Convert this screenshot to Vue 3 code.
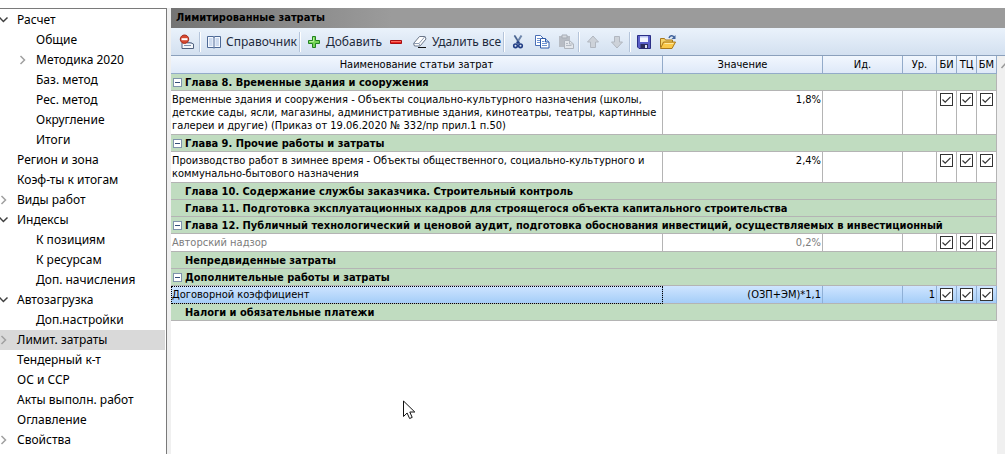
<template>
  <div class="page">
    <!-- Дерево разделов -->
    <nav class="sidebar">
      <ul class="tree">
        <li
          v-for="item in tree"
          :key="item.name"
          class="tree-item"
          :class="{ child: item.child, active: item.name === current }"
        >
          <button v-if="item.state" class="toggle" :class="item.state" :aria-label="item.name">
            <svg v-if="item.state === 'open'" width="9" height="8" viewBox="0 0 9 8">
              <path d="M-0.5 1.5l3.900 4L7.500 1.500" />
            </svg>
            <svg v-else width="9" height="10" viewBox="0 0 9 10">
              <path d="M1.500 1l4 4-4 4" />
            </svg>
          </button>
          <span v-else class="toggle"></span>
          <a href="#" class="tree-link" @click.prevent="current = item.name">{{ item.name }}</a>
        </li>
      </ul>
    </nav>

    <main class="panel">
      <h1 class="title">Лимитированные затраты</h1>

      <!-- Панель инструментов -->
      <div class="toolbar">
        <button class="tool" aria-label="Исключить">
          <svg width="16" height="16" viewBox="0 0 16 16">
            <path d="M3 8.5h8l3.5 1.5v4.5H3z" fill="#f4f7fb" stroke="#50617e" />
            <path d="M8 9h5M5 11.5h7" stroke="#7e90ad" />
            <circle cx="5.5" cy="5.2" r="4.2" fill="#d84a32" stroke="#a32b1b" />
            <path d="M2.5 5.2h6" stroke="#fff" stroke-width="2" />
          </svg>
        </button>
        <span class="sep"></span>
        <button class="tool labelled">
          <svg width="16" height="16" viewBox="0 0 16 16">
            <path d="M1.5 2.5h6l.5 1 .5-1h6v11h-6l-.5.8-.5-.8h-6z" fill="#f5f9ff" stroke="#4d6996" />
            <path d="M8 3v11" stroke="#4d6996" />
            <path d="M3 5h3.500M3 7h3.500M3 9h3.500M3 11h3.500M9.500 5H13M9.500 7H13M9.500 9H13M9.500 11H13" stroke="#a4bce0" />
          </svg>
          <span>Справочник</span>
        </button>
        <span class="sep"></span>
        <button class="tool labelled">
          <svg width="16" height="16" viewBox="0 0 16 16">
            <path d="M6.500 2.500h3v4h4v3h-4v4h-3v-4h-4v-3h4z" fill="#75d655" stroke="#238222" />
            <path d="M7.500 3.500v4h-4" fill="none" stroke="#b6f09c" />
          </svg>
          <span>Добавить</span>
        </button>
        <button class="tool" aria-label="Удалить">
          <svg width="16" height="16" viewBox="0 0 16 16">
            <path d="M2.500 6.500h11v3h-11z" fill="#ea2420" stroke="#a80e10" />
            <path d="M3 7.500h10" stroke="#fb6c60" />
          </svg>
        </button>
        <button class="tool labelled">
          <svg width="16" height="16" viewBox="0 0 16 16">
            <path d="M1.500 9.500l6-7h5.500l1 2.500-6 7H2.500z" fill="#fff" stroke="#6a7689" />
            <path d="M1.500 9.500H7l1 2.500M7 9.500l6-7" fill="none" stroke="#8f9db2" />
            <path d="M6 13.500h8" stroke="#111" />
          </svg>
          <span>Удалить все</span>
        </button>
        <span class="sep"></span>
        <button class="tool" aria-label="Вырезать">
          <svg width="16" height="16" viewBox="0 0 16 16">
            <path d="M4.500 1.500l5 8M11.500 1.500l-5 8" stroke="#6e86ab" stroke-width="2" />
            <path d="M4.500 1.500l5 8" stroke="#405a88" />
            <circle cx="5.500" cy="11.800" r="1.800" fill="none" stroke="#233f86" stroke-width="1.600" />
            <circle cx="10.500" cy="11.800" r="1.800" fill="none" stroke="#233f86" stroke-width="1.600" />
            <circle cx="8" cy="8.500" r="1.300" fill="#233f86" />
          </svg>
        </button>
        <button class="tool" aria-label="Копировать">
          <svg width="16" height="16" viewBox="0 0 16 16">
            <path d="M1.500 1.500h5l2.500 2.500v7.500H1.500z" fill="#fff" stroke="#4a6fb5" />
            <path d="M3 4.500h3M3 6.500h4M3 8.500h4" stroke="#6c92d3" />
            <path d="M6.500 4.500h5l3.500 3.500v6H6.500z" fill="#fff" stroke="#305ba8" />
            <path d="M11.500 4.500V8H15" fill="#bcd2f2" stroke="#305ba8" />
            <path d="M8 7.500h2.500M8 9.500h5M8 11.500h5" stroke="#6c92d3" />
          </svg>
        </button>
        <button class="tool" aria-label="Вставить" disabled>
          <svg width="16" height="16" viewBox="0 0 16 16">
            <path d="M1 2h11v11H1z" fill="#b7bcc4" />
            <path d="M4 1h5v3H4z" fill="#d5d9df" stroke="#a7adb6" />
            <path d="M6.500 6.500h5L15.500 10v4.500h-9z" fill="#e3e7ec" stroke="#aeb4bd" />
            <path d="M11.500 6.500V10h4M8 11.500h5.500M8 9.500h2" fill="none" stroke="#b4bac3" />
          </svg>
        </button>
        <span class="sep"></span>
        <button class="tool" aria-label="Вверх" disabled>
          <svg width="16" height="16" viewBox="0 0 16 16">
            <path d="M8 2l5.500 6h-3v5.500h-5V8h-3z" fill="#cdd2d9" stroke="#b1b7c0" />
          </svg>
        </button>
        <button class="tool" aria-label="Вниз" disabled>
          <svg width="16" height="16" viewBox="0 0 16 16">
            <path d="M8 14L2.500 8h3V2.500h5V8h3z" fill="#cdd2d9" stroke="#b1b7c0" />
          </svg>
        </button>
        <span class="sep"></span>
        <button class="tool" aria-label="Сохранить">
          <svg width="16" height="16" viewBox="0 0 16 16">
            <path d="M1.500 1.500h13v13H3l-1.500-1.500z" fill="#5a5fc8" stroke="#2b2f86" />
            <path d="M4 2h8v6H4z" fill="#f3f6ff" />
            <path d="M4 2h8v1.500H4z" fill="#b9c3f0" />
            <path d="M4.500 10h7.500v4.500H4.500z" fill="#2a2c5c" />
            <path d="M9 11h2v3H9z" fill="#dfe4f5" />
          </svg>
        </button>
        <button class="tool" aria-label="Открыть">
          <svg width="16" height="16" viewBox="0 0 16 16">
            <path d="M.500 13.500v-9h4l1 1.500h7v3" fill="#f5d36b" stroke="#a9781b" />
            <path d="M.500 14.500l3-6.500h12l-3.500 6.500z" fill="#fbc94a" stroke="#a9781b" />
            <path d="M4.500 9.500h9" stroke="#ffe9a0" />
            <path d="M9 4c1-2.500 3.500-3 5-1" fill="none" stroke="#42649c" stroke-width="1.500" />
            <path d="M15.500 1v4h-4z" fill="#42649c" />
          </svg>
        </button>
      </div>

      <!-- Таблица затрат -->
      <div class="grid-area">
        <div class="grid">
          <table>
            <colgroup>
              <col />
              <col class="col-value" />
              <col class="col-id" />
              <col class="col-level" />
              <col class="col-flag" />
              <col class="col-flag" />
              <col class="col-flag" />
            </colgroup>
            <thead>
              <tr>
                <th v-for="h in headers" :key="h">{{ h }}</th>
              </tr>
            </thead>
            <tbody>
              <template v-for="row in rows" :key="row.name">
                <tr v-if="row.group" class="group">
                  <td colspan="7">
                    <div class="group-name">
                      <button v-if="row.open" class="collapse" aria-label="Свернуть"></button>
                      <span v-else class="collapse-space"></span>
                      <span>{{ row.name }}</span>
                    </div>
                  </td>
                </tr>
                <tr v-else class="item" :class="{ muted: row.muted, selected: row.selected }">
                  <td>{{ row.name }}</td>
                  <td class="num">{{ row.value }}</td>
                  <td></td>
                  <td class="num">{{ row.level }}</td>
                  <td v-for="flag in flags" :key="flag" class="flag">
                    <input type="checkbox" checked :aria-label="flag" />
                  </td>
                </tr>
              </template>
            </tbody>
          </table>

          <svg class="cursor" width="13" height="20" viewBox="0 0 13 20">
            <path d="M.500 1v15.500l3.600-3.500 2.500 5.500 2.600-1.100-2.400-5.400h5z" fill="#fff" stroke="#111" />
          </svg>
        </div>
        <div class="scrollbar">
          <svg width="17" height="17" viewBox="0 0 17 17">
            <path d="M4.500 12l4-4.500 4 4.500" fill="none" stroke="#9a9a9a" stroke-width="1.500" />
          </svg>
        </div>
      </div>
    </main>
  </div>
</template>

<script setup>
import { ref } from 'vue';

const current = ref('Лимит. затраты');

const tree = [
  { name: 'Расчет', state: 'open' },
  { name: 'Общие', child: true },
  { name: 'Методика 2020', child: true, state: 'closed' },
  { name: 'Баз. метод', child: true },
  { name: 'Рес. метод', child: true },
  { name: 'Округление', child: true },
  { name: 'Итоги', child: true },
  { name: 'Регион и зона' },
  { name: 'Коэф-ты к итогам' },
  { name: 'Виды работ', state: 'closed' },
  { name: 'Индексы', state: 'open' },
  { name: 'К позициям', child: true },
  { name: 'К ресурсам', child: true },
  { name: 'Доп. начисления', child: true },
  { name: 'Автозагрузка', state: 'open' },
  { name: 'Доп.настройки', child: true },
  { name: 'Лимит. затраты', state: 'closed' },
  { name: 'Тендерный к-т' },
  { name: 'ОС и ССР' },
  { name: 'Акты выполн. работ' },
  { name: 'Оглавление' },
  { name: 'Свойства', state: 'closed' },
];

const flags = ['БИ', 'ТЦ', 'БМ'];
const headers = ['Наименование статьи затрат', 'Значение', 'Ид.', 'Ур.', ...flags];

const rows = [
  { group: true, open: true, name: 'Глава 8. Временные здания и сооружения' },
  {
    name: 'Временные здания и сооружения - Объекты социально-культурного назначения (школы, детские сады, ясли, магазины, административные здания, кинотеатры, театры, картинные галереи и другие) (Приказ от 19.06.2020 № 332/пр прил.1 п.50)',
    value: '1,8%',
  },
  { group: true, open: true, name: 'Глава 9. Прочие работы и затраты' },
  {
    name: 'Производство работ в зимнее время - Объекты общественного, социально-культурного и коммунально-бытового назначения',
    value: '2,4%',
  },
  { group: true, name: 'Глава 10. Содержание службы заказчика. Строительный контроль' },
  { group: true, name: 'Глава 11. Подготовка эксплуатационных кадров для строящегося объекта капитального строительства' },
  { group: true, open: true, name: 'Глава 12. Публичный технологический и ценовой аудит, подготовка обоснования инвестиций, осуществляемых в инвестиционный' },
  { name: 'Авторский надзор', value: '0,2%', muted: true },
  { group: true, name: 'Непредвиденные затраты' },
  { group: true, open: true, name: 'Дополнительные работы и затраты' },
  { name: 'Договорной коэффициент', value: '(ОЗП+ЭМ)*1,1', level: '1', selected: true },
  { group: true, name: 'Налоги и обязательные платежи' },
];
</script>

<style>
body {
  margin: 0;
  background: #fff;
}
</style>

<style scoped>
* {
  box-sizing: border-box;
}

.page {
  display: flex;
  gap: 4px;
  height: 100vh;
  padding-top: 8px;
  overflow: hidden;
  font-family: 'Noto Sans', 'Open Sans', sans-serif;
  font-size: 12px;
  color: #000;
  background: linear-gradient(#fff 8px, #f0f0f0 8px);
}

button {
  padding: 0;
  border: none;
  background: none;
  font: inherit;
  color: inherit;
}

/* дерево */
.sidebar {
  flex: none;
  width: 167px;
  border-top: 1px solid #7a7a7a;
  border-right: 1px solid #7a7a7a;
  background: #fff;
  overflow: hidden;
}

.tree {
  margin: 0;
  padding: 1px 1px 0 0;
  list-style: none;
}

.tree-item {
  display: flex;
  align-items: center;
  height: 20px;
}

.tree-item.child {
  padding-left: 19px;
}

.tree-item.active {
  background: #d9d9d9;
}

.toggle {
  display: flex;
  flex: none;
  width: 17px;
}

.toggle path {
  fill: none;
  stroke: #a0a0a0;
  stroke-width: 1.5;
}

.toggle.open path {
  stroke: #404040;
}

.tree-link {
  color: #000;
  line-height: 20px;
  text-decoration: none;
  white-space: nowrap;
}

/* правая часть */
.panel {
  flex: 1;
  min-width: 0;
  display: flex;
  flex-direction: column;
}

.title {
  margin: 0;
  padding-left: 5px;
  font-family: 'DejaVu Sans Condensed', 'DejaVu Sans', sans-serif;
  font-size: 11px;
  font-weight: bold;
  line-height: 20px;
  background: linear-gradient(90deg, #747474, #9b9b9b 220px);
}

.toolbar {
  display: flex;
  align-items: center;
  height: 28px;
  padding-left: 4px;
  border-bottom: 1px solid #8ba0bc;
  background: linear-gradient(#eaf2fb, #d3e0f0);
  color: #1e2a3c;
}

.tool {
  display: flex;
  align-items: center;
  gap: 4px;
  height: 24px;
  padding: 0 4px;
  white-space: nowrap;
}

.tool.labelled {
  padding-right: 2px;
}

.tool svg {
  flex: none;
}

.sep {
  width: 2px;
  height: 20px;
  margin-right: 1px;
  border-left: 1px solid #b4c4da;
  border-right: 1px solid #fff;
}

.grid-area {
  flex: 1;
  min-height: 0;
  display: flex;
  background: #fff;
}

.grid {
  position: relative;
  flex: 1;
  min-width: 0;
  overflow: hidden;
}

.scrollbar {
  flex: none;
  width: 8px;
  background: #f0f0f0;
  overflow: hidden;
}

table {
  width: 100%;
  table-layout: fixed;
  border-collapse: separate;
  border-spacing: 0;
  font-family: 'DejaVu Sans Condensed', 'DejaVu Sans', sans-serif;
  font-size: 11px;
  line-height: 13px;
}

.col-value {
  width: 160px;
}

.col-id {
  width: 80px;
}

.col-level {
  width: 34px;
}

.col-flag {
  width: 20px;
}

th {
  height: 18px;
  padding: 0;
  border-right: 1px solid #93abc9;
  border-bottom: 1px solid #93abc9;
  background: linear-gradient(#f2f7fe, #dee9f8);
  font-weight: normal;
  text-align: center;
  white-space: nowrap;
}

td {
  height: 17px;
  padding: 0;
  border-right: 1px solid #b4b4b4;
  border-bottom: 1px solid #b4b4b4;
  vertical-align: top;
}

.group td {
  background: #c0dcc0;
  font-weight: bold;
}

.group-name {
  display: flex;
  align-items: center;
  gap: 3px;
  height: 16px;
  padding-left: 2px;
  overflow: hidden;
  white-space: nowrap;
}

.collapse,
.collapse-space {
  flex: none;
  width: 9px;
  height: 9px;
}

.collapse {
  border: 1px solid #7f93ac;
  background: linear-gradient(#35507a, #35507a) center / 5px 1px no-repeat #fff;
}

.item td {
  height: 18px;
  padding: 2px 1px;
}

.item .num {
  text-align: right;
}

.muted {
  color: #7c7c7c;
}

.selected td {
  border-right-color: #8fb0d6;
  background: linear-gradient(#cfe5ff, #a4cdf8);
}

.selected td:first-child {
  outline: 1px dotted #000;
  outline-offset: -1px;
}

.item .flag {
  padding: 2px 0 0 3px;
}

.flag input {
  appearance: none;
  display: block;
  width: 13px;
  height: 13px;
  margin: 0;
  border: 1px solid #333;
  background: #fff;
}

.flag input:checked {
  background: #fff url("data:image/svg+xml,%3Csvg xmlns='http://www.w3.org/2000/svg' viewBox='0 0 11 11'%3E%3Cpath d='M1.500 5.500l2.700 2.700L9.500 2.800' fill='none' stroke='%23333' stroke-width='1.200'/%3E%3C/svg%3E");
}

/* указатель мыши поверх пустой области */
.cursor {
  position: absolute;
  left: 232px;
  top: 344px;
}
</style>
